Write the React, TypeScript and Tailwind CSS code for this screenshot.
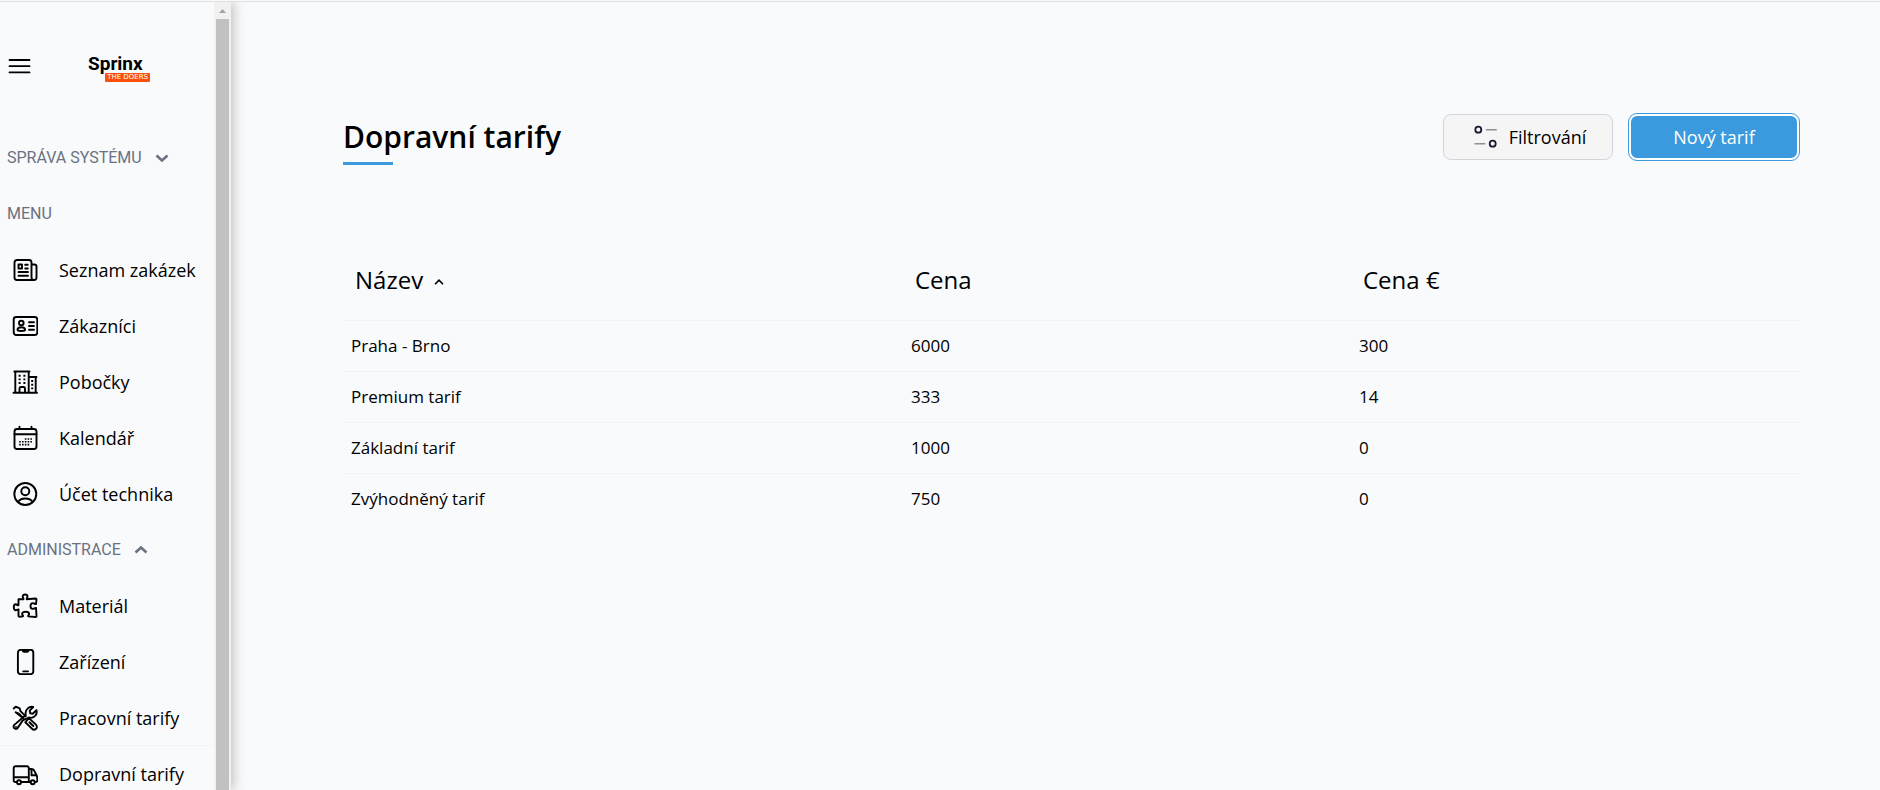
import type { ReactNode } from "react";

type Tariff = {
  name: string;
  price: number;
  priceEur: number;
};

type NavItem = {
  label: string;
  icon: ReactNode;
  active?: boolean;
};

const TARIFFS: Tariff[] = [
  { name: "Praha - Brno", price: 6000, priceEur: 300 },
  { name: "Premium tarif", price: 333, priceEur: 14 },
  { name: "Základní tarif", price: 1000, priceEur: 0 },
  { name: "Zvýhodněný tarif", price: 750, priceEur: 0 },
];

function Icon({ children }: { children: ReactNode }) {
  return (
    <svg
      viewBox="0 0 26 26"
      className="size-[26px] shrink-0"
      fill="none"
      stroke="currentColor"
      strokeWidth="1.9"
      strokeLinecap="round"
      strokeLinejoin="round"
      aria-hidden="true"
    >
      {children}
    </svg>
  );
}

const MENU: NavItem[] = [
  {
    label: "Seznam zakázek",
    icon: (
      <Icon>
        <path d="M22.5 23H5a2.5 2.5 0 0 1-2.5-2.5v-15A2.5 2.5 0 0 1 5 3h12a2.5 2.5 0 0 1 2.5 2.5v15a2.5 2.5 0 0 0 5 0V9.500a2 2 0 0 0-2-2h-3" />
        <path d="M6.500 7.500h3.500v4h-3.500zM13.200 7.700h2.600M13.200 11.500h2.600M6.500 15h9.500M6.500 18.800h9.500" />
      </Icon>
    ),
  },
  {
    label: "Zákazníci",
    icon: (
      <Icon>
        <rect x="1.700" y="4" width="23.600" height="18" rx="2.500" />
        <circle cx="9.300" cy="10" r="2.300" />
        <path d="M5.500 17c0-1.700 1.600-2.800 3.800-2.800s3.800 1.100 3.800 2.800c0 1.300-7.600 1.300-7.600 0zM17 9.200h5M17 13h5M17 16.800h5" />
      </Icon>
    ),
  },
  {
    label: "Pobočky",
    icon: (
      <Icon>
        <path d="M1.500 23.700h23.500M3.300 23.500v-21M16.700 23.500v-21M2.300 2.500h15.200M17 8h7.500M23.700 8v15.500M7.500 23.500v-4a1.500 1.500 0 0 1 1.500-1.500h2.500a1.500 1.500 0 0 1 1.500 1.500v4" />
        <path strokeLinecap="butt" d="M6.600 6.800h2M11.400 6.800h2M6.600 10.400h2M11.400 10.400h2M6.600 14h2M11.400 14h2M19.200 12h2M19.200 15.700h2M19.200 19.400h2" />
      </Icon>
    ),
  },
  {
    label: "Kalendář",
    icon: (
      <Icon>
        <rect x="2.500" y="4" width="22" height="20" rx="2.500" />
        <path d="M2.500 9.300h22M7.500 1.800v2.200M19.500 1.800v2.200" />
        <path strokeWidth="1.600" strokeLinecap="butt" strokeDasharray="1.600 1.200" d="M12.800 14h7.200M7.200 16.800h12.800M7.200 19.600h10" />
      </Icon>
    ),
  },
  {
    label: "Účet technika",
    icon: (
      <Icon>
        <circle cx="13.300" cy="13" r="11" />
        <circle cx="13.300" cy="10.300" r="4" />
        <path d="M6 21.200c1.300-2.400 4-3.700 7.300-3.700s6 1.300 7.300 3.700" />
      </Icon>
    ),
  },
];

const ADMIN: NavItem[] = [
  {
    label: "Materiál",
    icon: (
      <Icon>
        <path d="M6.500 6.200h5c.4-1-.8-1.400-.8-2.700 0-1.200 1-2 2.400-2s2.400.8 2.400 2c0 1.300-1.200 1.700-.8 2.700l8.800-.7c.8 0 1.100.4 1 1.100l-.5 4.400c-1 .4-1.800-.9-3.100-.9-1.400 0-2.400 1.300-2.400 2.900s1 2.900 2.400 2.900c1.300 0 2.100-1.300 3.100-.9l.5 8c0 .8-.4 1.100-1.100 1l-7.200-.6c-.5-.9.900-1.300.9-2.500 0-1.300-1.600-2.200-3.500-2.200s-3.500.9-3.500 2.200c0 1.200 1.400 1.600.9 2.500l-3.300.4c-.8.100-1.200-.3-1.200-1v-6.400c-1.100-.4-1.300.9-2.700.9-1.200 0-2-1.200-2-3s.8-3 2-3c1.400 0 1.600 1.300 2.700.9z" />
      </Icon>
    ),
  },
  {
    label: "Zařízení",
    icon: (
      <Icon>
        <rect x="5.900" y=".9" width="15.400" height="24.200" rx="2.800" />
        <path d="M10.500 1.200c.2 1.300.6 1.500 1.300 1.500h3.600c.7 0 1.100-.2 1.300-1.500zM11.200 22.400h4.800" />
      </Icon>
    ),
  },
  {
    label: "Pracovní tarify",
    icon: (
      <Icon>
        <path d="M1.700 3.500 3.700 1.700l4 1.700.8 2.800 5.200 5.200M11.600 13.400 6.300 8.300l-2.700-1z" />
        <path d="m10.800 15.400-5.300 7.700c-1.100 1.400-3.300.9-3.800-.9-.3-1 .1-2 .9-2.600l11.200-9.600c-.6-2.400.2-5 2-6.600 1.600-1.500 3.700-1.900 5.400-1.400l-3.500 3.700.5 2.500 2.500.5 3.700-3.600c.6 2.100.1 4.400-1.300 5.800-1.900 1.800-4.200 2.300-6.200 1.600z" />
        <path d="m13.300 17.300 3.600-4.200 6.800 6.300c1.500 1.500 1.500 3.400.3 4.400-1.200 1.100-3 1-4.200-.3zM17.500 17.300l3.800 3.700M4 21.900v.1" />
      </Icon>
    ),
  },
  {
    label: "Dopravní tarify",
    active: true,
    icon: (
      <Icon>
        <path d="M4.500 21H3.200a1.500 1.500 0 0 1-1.500-1.500V7a1.800 1.800 0 0 1 1.800-1.800H15A1.800 1.800 0 0 1 16.800 7v14H9.500M1.700 16.300h15.100M16.800 8h2.700c1.300 0 2.200.7 2.800 1.800l2.100 4.200c.6 1.200.9 2.200.9 3.500V19.500a1.500 1.500 0 0 1-1.500 1.500M17 21h1.500M19.500 8.300v5.900h5" />
        <circle cx="7" cy="21.200" r="2" />
        <circle cx="20.700" cy="21.200" r="2" />
      </Icon>
    ),
  },
];

function Chevron({ up = false }: { up?: boolean }) {
  return (
    <svg
      viewBox="0 0 14 10"
      className="h-[10px] w-[14px]"
      fill="none"
      stroke="currentColor"
      strokeWidth="2.6"
      aria-hidden="true"
    >
      <path d={up ? "M1.500 7.500 7 2.500l5.500 5" : "M1.500 2.500l5.500 5 5.500-5"} />
    </svg>
  );
}

function Logo() {
  return (
    <a href="#" aria-label="Sprinx" className="flex w-[62px] flex-col pt-1">
      <span className="font-[Roboto,sans-serif] text-[19px] leading-[19px] font-bold">
        Sprinx
      </span>
      <span className="self-end rounded-[1px] bg-[#fd4f0c] px-[2px] font-['DejaVu_Sans',sans-serif] text-[7px] leading-[9px] text-white">
        THE DOERS
      </span>
    </a>
  );
}

function NavList({ items }: { items: NavItem[] }) {
  return (
    <ul>
      {items.map((item) => (
        <li key={item.label}>
          <a
            href="#"
            aria-current={item.active ? "page" : undefined}
            className={`flex items-center gap-[21px] pl-3 text-[18px] whitespace-nowrap ${
              item.active ? "-mt-px h-[57px] border-t border-[#f3f4f6]" : "h-14"
            }`}
          >
            {item.icon}
            {item.label}
          </a>
        </li>
      ))}
    </ul>
  );
}

const groupClass =
  "flex h-14 items-center gap-[13px] pl-[7px] font-[Roboto,sans-serif] text-base font-normal text-gray-500";

function Sidebar() {
  return (
    <aside className="flex w-[231px] shrink-0 shadow-[2px_0_12px_rgba(0,0,0,0.25)]">
      <div className="min-w-0 flex-1 overflow-hidden">
        <div className="flex h-32 items-center gap-[57px] pl-2">
          <button type="button" aria-label="Menu">
            <svg viewBox="0 0 23 16" className="h-4 w-[23px]" stroke="currentColor" strokeWidth="1.8" strokeLinecap="round">
              <path d="M1.500 2h20M1.500 8.200h20M1.500 14.400h20" />
            </svg>
          </button>
          <Logo />
        </div>
        <nav>
          <button type="button" className={groupClass}>
            SPRÁVA SYSTÉMU
            <Chevron />
          </button>
          <h2 className={groupClass}>MENU</h2>
          <NavList items={MENU} />
          <button type="button" className={groupClass}>
            ADMINISTRACE
            <Chevron up />
          </button>
          <NavList items={ADMIN} />
        </nav>
      </div>

      {/* Scrollbar */}
      <div className="flex w-[17px] flex-col bg-[#f1f1f1] px-[2px]" aria-hidden="true">
        <div className="flex h-[17px] shrink-0 items-center justify-center">
          <svg viewBox="0 0 7 4" className="h-1 w-[7px]" fill="#a3a3a3">
            <path d="M0 4 3.500 0 7 4z" />
          </svg>
        </div>
        <div className="flex-1 bg-[#c1c1c1]" />
      </div>
    </aside>
  );
}

export default function App() {
  return (
    <div className="flex h-screen flex-col overflow-hidden bg-[#f9fafc] pt-px font-['Open_Sans',sans-serif] text-black">
      <div className="flex min-h-0 flex-1 overflow-hidden border-t border-[#dcdee0]">
        <Sidebar />

        <main className="min-w-0 flex-1 pt-28 pr-[81px] pl-28">
          <div className="flex items-start justify-between">
            <h1 className="flex flex-col gap-[2px] text-[30px] leading-[46px] font-semibold">
              Dopravní tarify
              <span className="h-[3px] w-[50px] bg-[#3b9add]" />
            </h1>
            <div className="flex gap-4 text-[18px]">
              <button
                type="button"
                className="flex h-[46px] w-[170px] items-center justify-center gap-[11px] rounded-lg border border-gray-300 bg-[#f5f5f5] pl-1"
              >
                <svg viewBox="0 0 24 24" className="size-6" fill="none" strokeLinecap="round" aria-hidden="true">
                  <g stroke="#1c1a30" strokeWidth="1.8">
                    <circle cx="4.300" cy="4.700" r="3" />
                    <circle cx="18.700" cy="18.700" r="3" />
                  </g>
                  <path stroke="#8e8d98" strokeWidth="1.400" d="M12.500 4.700H22.300M1 18.700h9.800" />
                </svg>
                Filtrování
              </button>
              <button
                type="button"
                className="h-[46px] w-[170px] rounded-lg border-2 border-white bg-[#3b9add] text-white outline-1 outline-[#3b9add]"
              >
                Nový tarif
              </button>
            </div>
          </div>

          <table className="mt-[75px] w-full table-fixed border-collapse text-left">
            <colgroup>
              <col className="w-5/13" />
              <col className="w-4/13" />
              <col className="w-4/13" />
            </colgroup>
            <thead>
              <tr className="h-20 text-2xl">
                <th className="pl-3 font-normal" aria-sort="ascending">
                  <button type="button" className="flex items-center gap-[11px]">
                    Název
                    <svg viewBox="0 0 10 6" className="mt-1 h-[6px] w-[10px]" fill="none" stroke="currentColor" strokeWidth="1.600" aria-hidden="true">
                      <path d="M1 5.200 5 1.200l4 4" />
                    </svg>
                  </button>
                </th>
                <th className="pl-3 font-normal">Cena</th>
                <th className="pl-3 font-normal">Cena €</th>
              </tr>
            </thead>
            <tbody>
              {TARIFFS.map((tariff) => (
                <tr key={tariff.name} className="h-[51px] border-t border-[#f1f2f4] text-[17px]">
                  <td className="px-2">{tariff.name}</td>
                  <td className="px-2">{tariff.price}</td>
                  <td className="px-2">{tariff.priceEur}</td>
                </tr>
              ))}
            </tbody>
          </table>
        </main>
      </div>
    </div>
  );
}
